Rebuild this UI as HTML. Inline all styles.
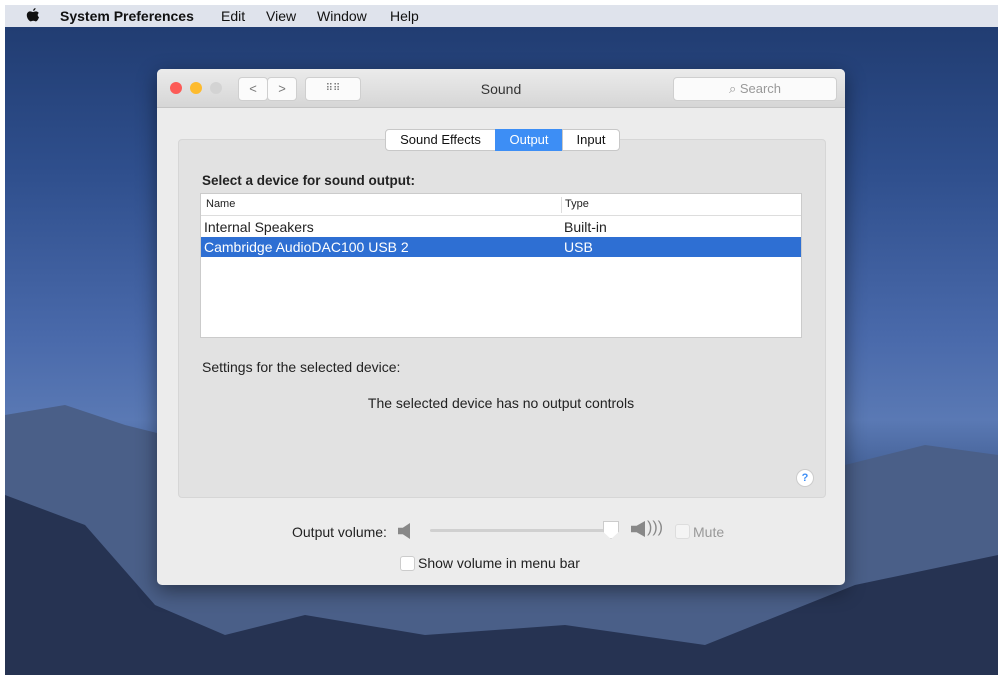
<!DOCTYPE html>
<html><head><style>
body{margin:0;width:1004px;height:680px;background:#fff;position:relative;overflow:hidden;font-family:"Liberation Sans",sans-serif;}
#desk{position:absolute;left:5px;top:5px;width:993px;height:670px;background:linear-gradient(180deg,#1f3a6e 0%,#2f4f8d 25%,#4a6aab 50%,#5a79b4 62%,#3e5a8e 72%,#2b3f66 85%,#1c2a48 100%);overflow:hidden}
#menu{position:absolute;left:0;top:0;width:993px;height:22px;background:#dfe3ec;font-size:14px;color:#111}
#menu span{position:absolute;top:3px}
.abs{position:absolute}
#win{position:absolute;left:152px;top:64px;width:688px;height:516px;background:#ececec;border-radius:5px;box-shadow:0 6px 20px rgba(0,0,0,.45)}
#title{position:absolute;left:0;top:0;width:688px;height:38px;background:linear-gradient(#ebebeb,#d6d6d6);border-radius:5px 5px 0 0;border-bottom:1px solid #c4c4c4}
.dot{position:absolute;top:13px;width:12px;height:12px;border-radius:50%}
.btn{position:absolute;top:8px;height:22px;background:#fbfbfb;border:1px solid #cfcfcf;border-radius:4px;color:#777;font-size:13px;text-align:center;line-height:21px}
#panel{position:absolute;left:21px;top:70px;width:646px;height:357px;background:#e2e2e2;border:1px solid #d6d6d6;border-radius:4px}
.tab{position:absolute;top:60px;height:20px;font-size:13px;line-height:20px;text-align:center;background:#fff;border:1px solid #c8c8c8;color:#111}
#tbl{position:absolute;left:43px;top:124px;width:600px;height:143px;background:#fff;border:1px solid #cbcbcb}
.t{font-size:14px;color:#222;position:absolute}
</style></head><body>
<div id="desk">
<svg class="abs" style="left:0;top:380px" width="993" height="290"><path d="M0 30 L60 20 L120 40 L200 60 L260 90 L330 120 L420 150 L520 170 L640 150 L760 110 L840 80 L920 60 L993 70 L993 290 L0 290Z" fill="#4a5f88"/><path d="M0 110 L80 140 L150 220 L220 250 L300 230 L420 250 L560 240 L700 260 L850 200 L993 170 L993 290 L0 290Z" fill="#263352"/></svg>
<div id="menu"><svg class="abs" style="left:21px;top:3px" width="14" height="16" viewBox="0 0 14 16"><path d="M9.5 0C9.6 1.3 8.6 2.8 7.2 2.9 7 1.6 8.1 0.2 9.5 0Z M7 4C8 4 9 3.3 10 3.4 11.2 3.5 12.2 4.1 12.8 5 11.3 5.9 11.4 8.3 13 9.1 12.5 10.8 11.2 13.4 9.8 13.4 8.8 13.4 8.5 12.8 7.3 12.8 6 12.8 5.6 13.4 4.7 13.4 3.2 13.4 0.8 10.2 0.8 7.3 0.8 4.6 2.6 3.4 4.1 3.4 5.3 3.4 6 4 7 4Z" fill="#111"/></svg><span style="left:55px;font-weight:bold">System Preferences</span><span style="left:216px">Edit</span><span style="left:261px">View</span><span style="left:312px">Window</span><span style="left:385px">Help</span></div>
<div id="win">
<div id="title">
<div class="dot" style="left:13px;background:#fc5b57"></div><div class="dot" style="left:33px;background:#fdbb2e"></div><div class="dot" style="left:53px;background:#d3d3d3"></div>
<div class="btn" style="left:81px;width:28px">&lt;</div><div class="btn" style="left:110px;width:28px">&gt;</div>
<div class="btn" style="left:148px;width:54px;font-size:10px">⠿⠿</div>
<div class="abs" style="left:0;width:688px;top:12px;text-align:center;font-size:14px;color:#333">Sound</div>
<div class="btn" style="left:516px;width:162px;color:#999">⌕ Search</div>
</div>
<div id="panel"></div>
<div class="tab" style="left:228px;width:109px;border-radius:4px 0 0 4px">Sound Effects</div>
<div class="tab" style="left:338px;width:66px;background:#3d8ef5;border-color:#3d8ef5;color:#fff">Output</div>
<div class="tab" style="left:405px;width:56px;border-radius:0 4px 4px 0">Input</div>
<div class="t" style="left:45px;top:104px;font-weight:bold;font-size:13.5px">Select a device for sound output:</div>
<div id="tbl">
<div class="abs" style="left:0;top:0;width:600px;height:21px;border-bottom:1px solid #ddd"></div>
<div class="abs" style="left:360px;top:3px;height:16px;border-left:1px solid #ddd"></div>
<div class="t" style="left:5px;top:4px;font-size:11px">Name</div><div class="t" style="left:364px;top:4px;font-size:11px">Type</div>
<div class="t" style="left:3px;top:25px">Internal Speakers</div><div class="t" style="left:363px;top:25px">Built-in</div>
<div class="abs" style="left:0;top:43px;width:600px;height:20px;background:#2e6fd3"></div>
<div class="t" style="left:3px;top:45px;color:#fff">Cambridge AudioDAC100 USB 2</div><div class="t" style="left:363px;top:45px;color:#fff">USB</div>
</div>
<div class="t" style="left:45px;top:290px">Settings for the selected device:</div>
<div class="t" style="left:0;width:688px;text-align:center;top:326px">The selected device has no output controls</div>
<div class="abs" style="left:639px;top:400px;width:16px;height:16px;border-radius:50%;background:#fff;border:1px solid #ccc;color:#3d8ef5;font-size:11px;text-align:center;line-height:16px;font-weight:bold">?</div>
<div class="t" style="left:135px;top:455px">Output volume:</div>
<div class="abs" style="left:241px;top:454px;width:12px;height:16px;background:#888;clip-path:polygon(0 30%,40% 30%,100% 0,100% 100%,40% 70%,0 70%)"></div>
<div class="abs" style="left:273px;top:460px;width:178px;height:3px;background:#d0d0d0;border-radius:2px"></div>
<div class="abs" style="left:446px;top:452px;width:14px;height:16px;background:#fff;border:1px solid #ccc;clip-path:polygon(0 0,100% 0,100% 60%,50% 100%,0 60%)"></div>
<div class="abs" style="left:474px;top:452px;width:14px;height:16px;background:#888;clip-path:polygon(0 30%,40% 30%,100% 0,100% 100%,40% 70%,0 70%)"></div>
<div class="t" style="left:490px;top:450px;color:#888;font-size:16px">)))</div>
<div class="abs" style="left:518px;top:455px;width:13px;height:13px;background:#f4f4f4;border:1px solid #ddd;border-radius:3px"></div>
<div class="t" style="left:536px;top:455px;color:#999">Mute</div>
<div class="abs" style="left:243px;top:487px;width:13px;height:13px;background:#fff;border:1px solid #ccc;border-radius:3px"></div>
<div class="t" style="left:261px;top:486px">Show volume in menu bar</div>
</div>
</div>
</body></html>
